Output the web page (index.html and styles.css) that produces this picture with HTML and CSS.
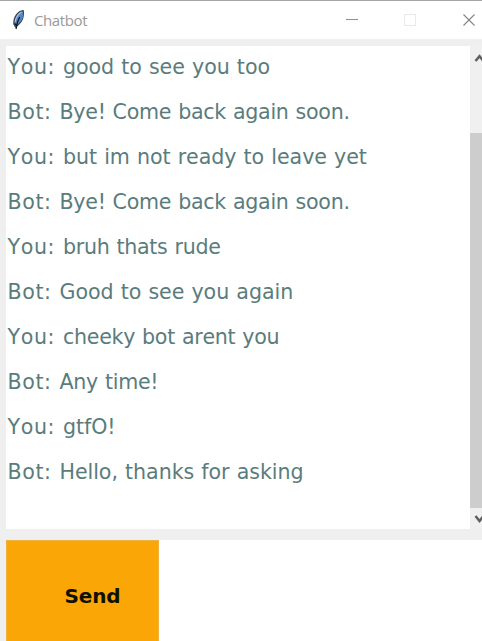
FILE: index.html
```html
<!DOCTYPE html>
<html lang="en">
<head>
<meta charset="utf-8">
<title>Chatbot</title>
<link rel="stylesheet" href="styles.css">
</head>
<body>
<div class="window">
  <header class="titlebar">
    <svg class="feather" viewBox="0 0 14 22" width="14" height="22">
      <path d="M12.2 1.5C7 2 2.3 8 2.8 15L4.5 18L7.5 15.5C11 12.5 13.6 7 12.2 1.5Z" fill="#5389c9" stroke="#39424e" stroke-width="1.1"/>
      <path d="M10.5 3C7 5.5 4.3 9 4.2 13" fill="none" stroke="#b3bfcc" stroke-width="1.1"/>
      <path d="M8.8 8L6.5 13L5 20M3.6 14.5L5.5 16.5" fill="none" stroke="#11141b" stroke-width="1.2"/>
    </svg>
    <h1 class="title">Chatbot</h1>
    <svg class="controls" viewBox="0 0 136 20" width="136" height="20" shape-rendering="crispEdges">
      <path d="M0 9.5H12" stroke="#8e8e8e"/>
      <rect x="58.5" y="4.5" width="11" height="11" fill="none" stroke="#e9e9e9"/>
      <path d="M117.5 4.5L128.5 15.5M128.5 4.5L117.5 15.5" stroke="#858585" stroke-width="1.1" shape-rendering="auto"/>
    </svg>
  </header>
  <main class="body">
    <section class="chat">
      <div class="log">
        <p><span class="who">You: </span>good to see you too</p>
        <p class="tight"><span class="who">Bot: </span>Bye! Come back again soon.</p>
        <p><span class="who">You: </span>but im not ready to leave yet</p>
        <p class="tight"><span class="who">Bot: </span>Bye! Come back again soon.</p>
        <p class="tight"><span class="who">You: </span>bruh thats rude</p>
        <p><span class="who">Bot: </span>Good to see you again</p>
        <p class="tight"><span class="who">You: </span>cheeky bot arent you</p>
        <p class="tight"><span class="who">Bot: </span>Any time!</p>
        <p><span class="who">You: </span>gtfO!</p>
        <p><span class="who">Bot: </span>Hello, thanks for asking</p>
      </div>
      <div class="scrollbar">
        <svg class="arrow" viewBox="0 0 12 87" width="12" height="87"><path d="M5.5 15L9.5 10.2L13.5 15" fill="none" stroke="#606060" stroke-width="2.6"/></svg>
        <div class="thumb"></div>
        <svg class="arrow" viewBox="0 0 12 21" width="12" height="21"><path d="M5.5 8L9.5 13L13.5 8" fill="none" stroke="#606060" stroke-width="2.6"/></svg>
      </div>
    </section>
    <section class="composer">
      <button class="send">Send</button>
      <div class="entry"></div>
    </section>
  </main>
</div>
</body>
</html>
```
FILE: styles.css
```css
* { box-sizing: border-box; }
body { margin: 0; overflow: hidden; background: #fff; }
.window { width: 482px; height: 641px; display: flex; flex-direction: column; overflow: hidden; border-top: 1px solid #a6a6a6; }
.titlebar { height: 38px; display: flex; align-items: center; padding-left: 11px; flex: none; }
.feather { margin-right: 9px; }
.title { margin: 0; flex: 1; font: 400 15px/20px "Open Sans", sans-serif; color: #999; letter-spacing: -0.4px; }
.controls { flex: none; }
.body { flex: 1; background: #efefef; padding: 7px 0 0 6px; display: flex; flex-direction: column; }
.chat { height: 483px; display: flex; flex: none; }
.log { flex: 1; background: #fff; padding: 9px 0 0 1.5px; overflow: hidden; }
.log p { margin: 0 0 21px; font: 20.6px/24px "DejaVu Sans", sans-serif; font-kerning: none; letter-spacing: -0.06px; word-spacing: 0.7px; color: #5a7c7d; white-space: nowrap; }
.log .tight { letter-spacing: -0.28px; }
.log .who { letter-spacing: 0.6px; }
.scrollbar { width: 12px; display: flex; flex-direction: column; background: #f0f0f0; overflow: hidden; }
.arrow { flex: none; display: block; }
.thumb { flex: 1; background: #cdcdcd; }
.composer { flex: 1; margin-top: 11px; display: flex; }
.send { width: 153px; border: 1px solid #efb440; border-bottom: 0; background: #faa606; padding: 10px 0 0 20px; font: bold 20px/24px "DejaVu Sans", sans-serif; letter-spacing: -0.1px; color: #101000; }
.entry { flex: 1; background: #fff; }
```
